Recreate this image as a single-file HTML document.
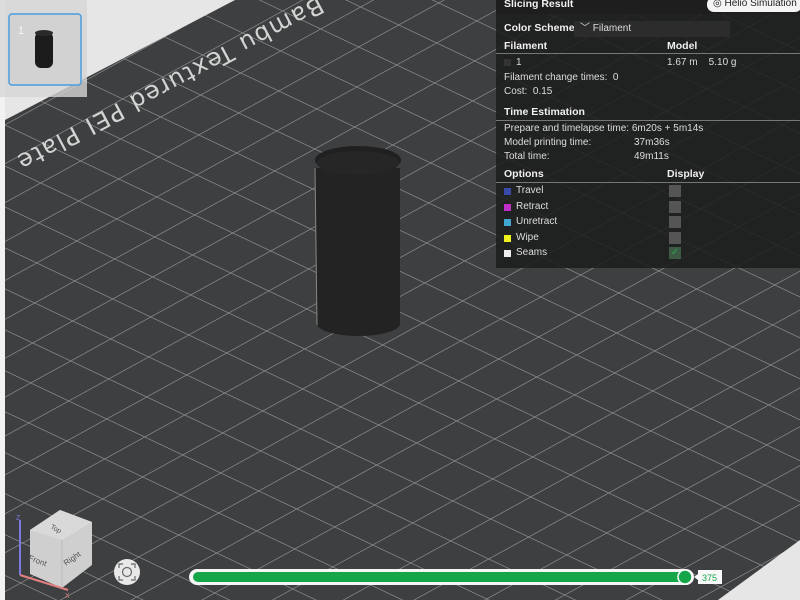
<!DOCTYPE html>
<html><head><style>
*{margin:0;padding:0;box-sizing:border-box}
body{width:800px;height:600px;overflow:hidden;background:#e6e6e6;font-family:"Liberation Sans",sans-serif;position:relative}
#panel{position:absolute;left:496px;top:0;width:304px;height:268px;background:rgba(28,28,28,0.86);color:#ddd;font-size:10px}
#panel .r{position:absolute;white-space:nowrap}
.b{font-weight:bold;color:#f0f0f0;font-size:10.5px}
.hr{position:absolute;left:0;width:304px;height:1px;background:#777}
.sw{position:absolute;left:8px;width:7px;height:7px}
.cb{position:absolute;left:173px;width:12px;height:12px;background:#555}
</style></head><body>
<svg width="800" height="600" style="position:absolute;left:0;top:0">
<defs>
<pattern id="g" width="40" height="40" patternUnits="userSpaceOnUse" patternTransform="matrix(0.95 0.45 1.0 -0.55 10 5)">
<rect width="40" height="40" fill="#3d3f40"/>
<line x1="0" y1="0" x2="40" y2="0" stroke="#9a9c9c" stroke-width="1.4"/>
<line x1="0" y1="0" x2="0" y2="40" stroke="#9a9c9c" stroke-width="1.4"/>
</pattern>
</defs>
<polygon points="5,120 235,0 800,0 800,540 718,600 5,600" fill="url(#g)"/>
<rect x="0" y="0" width="5" height="600" fill="#f2f2f2"/>
<text x="0" y="0" transform="translate(318,-4) rotate(152)" fill="#d4d4d4" font-size="24" font-family="DejaVu Sans" letter-spacing="1.5">Bambu Textured PEI Plate</text>
<!-- cylinder -->
<path d="M315,168 L317,325 A42,13 0 0 0 400,325 L400,168 Z" fill="#232323"/>
<ellipse cx="358" cy="160" rx="43" ry="14" fill="#202020"/>
<ellipse cx="358" cy="163" rx="41" ry="12" fill="#262626"/>
<line x1="315" y1="168" x2="317" y2="325" stroke="#888" stroke-width="1"/>
<!-- thumbnail -->
<rect x="0" y="0" width="87" height="97" fill="#d6d6d6" opacity="0.8"/>
<rect x="9" y="14" width="72" height="71" rx="3" fill="#d2d2d2" stroke="#4a9de0" stroke-width="1.5"/>
<text x="18" y="34" fill="#f5f5f5" font-size="11">1</text>
<rect x="35" y="32" width="18" height="36" rx="6" fill="#1c1c1c"/>
<ellipse cx="44" cy="33" rx="9" ry="3" fill="#2a2a2a"/>
<!-- nav cube -->
<polygon points="30,530 60,510 92,522 92,565 62,588 30,574" fill="#cfcfcf"/>
<polygon points="30,530 60,510 92,522 62,540" fill="#d9d9d9"/>
<line x1="62" y1="540" x2="62" y2="588" stroke="#bbb"/>
<line x1="20" y1="520" x2="20" y2="575" stroke="#7a7ae0" stroke-width="2"/>
<line x1="20" y1="575" x2="68" y2="590" stroke="#e08080" stroke-width="2"/>
<text x="16" y="520" fill="#7a7ae0" font-size="7">Z</text>
<text x="65" y="598" fill="#e08080" font-size="7">X</text>
<text x="50" y="528" fill="#555" font-size="7" transform="rotate(30 50 528)">Top</text>
<text x="28" y="560" fill="#555" font-size="8" transform="rotate(20 28 560)">Front</text>
<text x="66" y="566" fill="#555" font-size="8" transform="rotate(-35 66 566)">Right</text>
<!-- reset view -->
<circle cx="127" cy="572" r="13" fill="#e8e8e8"/>
<circle cx="127" cy="572" r="4.5" fill="none" stroke="#666" stroke-width="1.2"/>
<path d="M119,568v-4h4 M131,564h4v4 M135,576v4h-4 M123,580h-4v-4" fill="none" stroke="#666" stroke-width="1.2"/>
<!-- slider -->
<rect x="189" y="569" width="505" height="16" rx="8" fill="#f5f5f5"/>
<rect x="193" y="572" width="492" height="10" rx="5" fill="#16a64a"/>
<circle cx="685" cy="577" r="7" fill="#16a64a" stroke="#fff" stroke-width="1.5"/>
<rect x="698" y="570" width="24" height="14" fill="#f8f8f8"/>
<polygon points="694,577 698,574 698,580" fill="#f8f8f8"/>
<text x="702" y="581" fill="#16a64a" font-size="9">375</text>
</svg>
<div id="panel">
<div style="position:absolute;left:0;top:0;width:304px;height:14px;background:#1e1e1e"></div>
<div class="r b" style="left:8px;top:-2px">Slicing Result</div>
<div class="r" style="left:211px;top:-3px;width:95px;height:15px;background:#f4f4f4;border-radius:7px;color:#222;font-size:10px;padding-left:6px;line-height:14px">◎ Helio Simulation</div>
<div class="r b" style="left:8px;top:22px">Color Scheme</div>
<div class="r" style="left:78px;top:21px;width:156px;height:16px;background:#2c2c2c;color:#ddd;padding-left:6px;line-height:16px">﹀ Filament</div>
<div class="r b" style="left:8px;top:40px">Filament</div>
<div class="r b" style="left:171px;top:40px">Model</div>
<div class="hr" style="top:53px"></div>
<div class="sw" style="top:59px;background:#333"></div>
<div class="r" style="left:20px;top:57px">1</div>
<div class="r" style="left:171px;top:57px">1.67 m &nbsp;&nbsp; 5.10 g</div>
<div class="r" style="left:8px;top:72px">Filament change times:&nbsp; 0</div>
<div class="r" style="left:8px;top:86px">Cost:&nbsp; 0.15</div>
<div class="r b" style="left:8px;top:106px">Time Estimation</div>
<div class="hr" style="top:120px"></div>
<div class="r" style="left:8px;top:123px">Prepare and timelapse time: 6m20s + 5m14s</div>
<div class="r" style="left:8px;top:137px">Model printing time:</div>
<div class="r" style="left:138px;top:137px">37m36s</div>
<div class="r" style="left:8px;top:151px">Total time:</div>
<div class="r" style="left:138px;top:151px">49m11s</div>
<div class="r b" style="left:8px;top:168px">Options</div>
<div class="r b" style="left:171px;top:168px">Display</div>
<div class="hr" style="top:182px"></div>
<div class="sw" style="top:188px;background:#3a4aa8"></div><div class="r" style="left:20px;top:185px">Travel</div><div class="cb" style="top:185px"></div>
<div class="sw" style="top:204px;background:#c030c8"></div><div class="r" style="left:20px;top:201px">Retract</div><div class="cb" style="top:201px"></div>
<div class="sw" style="top:219px;background:#40a8d0"></div><div class="r" style="left:20px;top:216px">Unretract</div><div class="cb" style="top:216px"></div>
<div class="sw" style="top:235px;background:#f0f020"></div><div class="r" style="left:20px;top:232px">Wipe</div><div class="cb" style="top:232px"></div>
<div class="sw" style="top:250px;background:#eee"></div><div class="r" style="left:20px;top:247px">Seams</div><div class="cb" style="top:247px;background:#3d5a45;color:#2fa050;font-size:10px;line-height:12px;text-align:center">✓</div>
</div>
</body></html>
